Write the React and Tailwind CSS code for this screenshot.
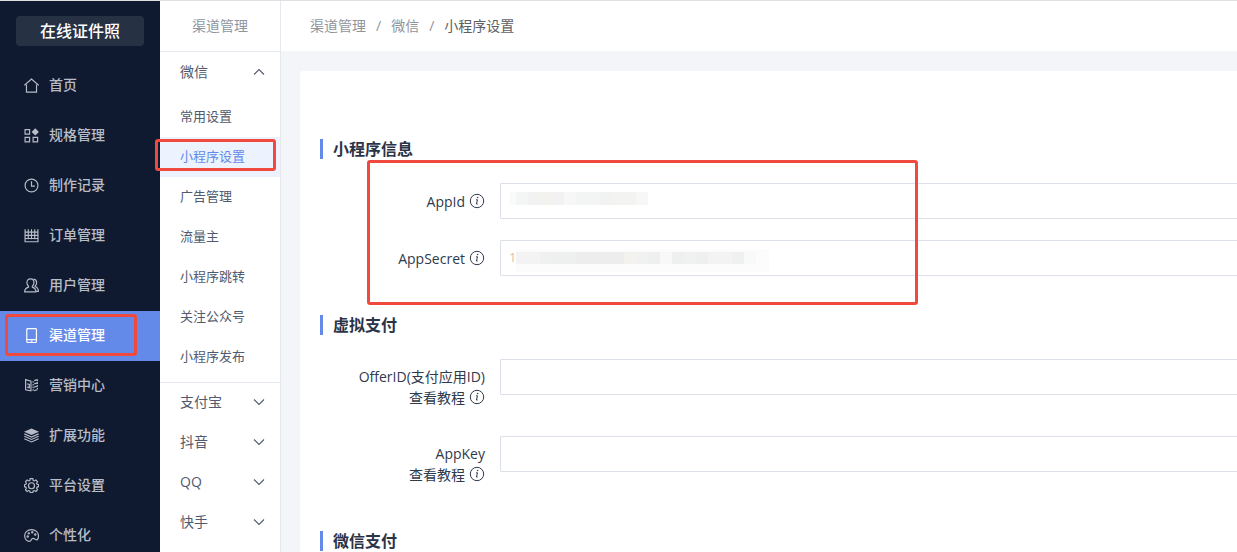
import { useState } from "react";

const ICONS = {
    home: (
        <>
            <path d="M0.3 6.8 7 1l6.7 5.8" />
            <path d="M2.3 6v7.200h9.400V6" />
        </>
    ),
    spec: (
        <>
            <path d="M1 1.500h4.200v4.200H1zM1 8.700h4.200v4.200H1zM8.500 8.700h4.200v4.200H8.500z" />
            <path d="M10.500 0.300 13.900 3.700 10.500 7.100 7.100 3.700z" fill="currentColor" stroke="none" />
        </>
    ),
    clock: (
        <>
            <circle cx="7" cy="7" r="6" />
            <path d="M7 3v4.500h3.200" />
        </>
    ),
    order: (
        <>
            <path d="M1 1.200v11.600h12V1.200M1 3.800h12M1 6.800h12M1 9.800h12" />
            <path d="M4 1.200v9.300M7 1.200v9.300M10 1.200v9.300" />
        </>
    ),
    user: (
        <>
            <path d="M6 0.8c2 0 3.300 1.400 3.300 3.500 0 1.600-.7 2.800-1.500 3.400v.8c2 .6 3.400 1.800 3.400 4.500H.6c0-2.700 1.500-3.900 3.600-4.500v-.8C3.300 7 2.700 5.900 2.700 4.300 2.700 2.200 4 .8 6 .8z" />
            <path d="M9 1c1.800.2 2.800 1.600 2.800 3.300 0 1.500-.6 2.500-1.400 3.100v.6c1.900.7 3 2 3 4.400h-2" />
        </>
    ),
    phone: (
        <>
            <rect x="2.600" y="0.500" width="9" height="13" rx="1" />
            <path d="M2.600 10.900h9" />
            <path d="M6.200 12.300h1.800" />
        </>
    ),
    market: (
        <>
            <path d="M1.500 1.500 6.500 3v9l-5-1z" />
            <path d="M3 5.500 5 6v3l-2-.5" />
            <path d="M9.500 2.500 12.500 1.500M9.500 5.500 12.500 4.500M9.500 8.500 12.500 7.500M9.500 11.800l3-.8" />
            <path d="M8.500 3v9M12.500 1.500v10" strokeDasharray="1.500 1" />
        </>
    ),
    layers: (
        <>
            <path d="M7 0.500 14 3.500 7 6.600 0 3.500z" fill="currentColor" stroke="none" />
            <path d="M.3 5.500 7 8.500l6.700-3M.3 7.700l6.700 3 6.700-3M.3 10l6.700 3 6.700-3" />
        </>
    ),
    gear: (
        <>
            <path d="M5.800.6h2.400l.4 1.700 1 .4L11.100 1.800l1.500 1.600-.8 1.500.4 1 1.400.4v1.800l-1.400.4-.4 1 .8 1.500-1.500 1.600-1.500-.9-1 .4-.4 1.600H5.800l-.4-1.600-1-.4-1.500.9-1.500-1.600.8-1.500-.4-1L.4 8.100V6.300l1.400-.4.4-1-.8-1.500 1.500-1.600 1.500.9 1-.4z" />
            <circle cx="7" cy="7.200" r="2.800" />
        </>
    ),
    palette: (
        <>
            <path d="M7 1.500C3.300 1.500.6 4 .6 7.200c0 3.100 2.200 5.300 4.400 5.300 2.500 0 1.200-2.800 3.400-2.800 1.600 0 2.300 1.300 3.500 1.300 1 0 1.600-1.500 1.600-3.500C13.500 4 10.700 1.500 7 1.500z" />
            <circle cx="3.500" cy="8" r=".6" />
            <circle cx="4.500" cy="5" r=".6" />
            <circle cx="7.700" cy="4" r=".6" />
            <circle cx="10.500" cy="6" r=".6" />
        </>
    ),
};

const NAV = [
    { label: "首页", icon: "home" },
    { label: "规格管理", icon: "spec" },
    { label: "制作记录", icon: "clock" },
    { label: "订单管理", icon: "order" },
    { label: "用户管理", icon: "user" },
    { label: "渠道管理", icon: "phone", active: true },
    { label: "营销中心", icon: "market" },
    { label: "扩展功能", icon: "layers" },
    { label: "平台设置", icon: "gear" },
    { label: "个性化", icon: "palette" },
];

const WECHAT_ITEMS = [
    "常用设置",
    "小程序设置",
    "广告管理",
    "流量主",
    "小程序跳转",
    "关注公众号",
    "小程序发布",
];

const OTHER_CHANNELS = ["支付宝", "抖音", "QQ", "快手"];

const Icon = ({ name }) => (
    <svg
        viewBox="0 0 14 14"
        className="h-[15px] w-[15px] shrink-0"
        fill="none"
        stroke="currentColor"
        strokeWidth="1.100"
        aria-hidden="true"
    >
        {ICONS[name]}
    </svg>
);

const InfoIcon = () => (
    <svg
        viewBox="0 0 16 16"
        className="ml-1 inline-block h-4 w-4 align-[-2px]"
        fill="none"
        stroke="currentColor"
        aria-hidden="true"
    >
        <circle cx="8" cy="8" r="6.700" />
        <path d="M7 6.800h1.500l-1.100 4.200h1.300" />
        <circle cx="8.600" cy="4.500" r=".8" fill="currentColor" stroke="none" />
    </svg>
);

const Chevron = ({ up }) => (
    <svg
        viewBox="0 0 12 12"
        className="h-3 w-3"
        fill="none"
        stroke="currentColor"
        strokeWidth="1.100"
        aria-hidden="true"
    >
        <path d={up ? "M1 8.500 6 3.500l5 5" : "M1 3.500l5 5 5-5"} />
    </svg>
);

// red marker frame, placed over whatever it highlights
const Marker = ({ className }) => (
    <span
        className={`pointer-events-none absolute z-10 rounded-[3px] border-3 border-[#f04a3e] ${className}`}
    />
);

const Section = ({ title, children }) => (
    <section className="mb-[39px]">
        <h2 className="mb-6 border-l-3 border-[#648ae9] pl-2.5 text-base leading-5 font-bold text-[#2b3447]">
            {title}
        </h2>
        <div className="relative flex flex-col gap-[21px]">{children}</div>
    </section>
);

const Field = ({ id, label, tutorial, children }) => {
    const [value, setValue] = useState("");

    return (
        <div className="flex items-start gap-[15px]">
            <div
                className={`w-[165px] shrink-0 text-right leading-[21px] text-[#2f3a4c] ${tutorial ? "pt-[7px] pb-[7px]" : "pt-2"}`}
            >
                <label htmlFor={id}>{label}</label>
                {tutorial && (
                    <>
                        <br />
                        <a href="#tutorial">查看教程</a>
                    </>
                )}
                <InfoIcon />
            </div>
            <div className="relative min-w-0 flex-1">
                <input
                    id={id}
                    type="text"
                    value={value}
                    onChange={(e) => setValue(e.target.value)}
                    className="block h-9 w-full rounded-l-xs border border-r-0 border-[#dce0e8] bg-white px-2.5 outline-none"
                />
                {children}
            </div>
        </div>
    );
};

export default function App() {
    return (
        <div className="flex h-screen overflow-hidden border-t border-[#dfe0e0] bg-[#f4f5f9] font-['Open_Sans','Noto_Sans_CJK_SC',sans-serif] text-sm">
            <nav className="w-40 shrink-0 bg-[#0f1a30] pt-[15px]">
                <div className="mx-4 mb-[15px] flex h-[30px] items-center justify-center rounded bg-[#273144] text-base font-medium text-white">
                    在线证件照
                </div>
                {NAV.map((item) => (
                    <a
                        key={item.label}
                        href="#nav"
                        className={`relative flex h-[50px] items-center gap-2.5 pb-0.5 pl-6 font-medium ${
                            item.active ? "bg-[#648ae9] text-white" : "text-[#b7bcc6]"
                        }`}
                    >
                        <Icon name={item.icon} />
                        {item.label}
                        {item.active && <Marker className="top-[3px] left-[5px] h-[42px] w-[132px]" />}
                    </a>
                ))}
            </nav>

            <aside className="w-[121px] shrink-0 border-r border-[#e6e8f0] bg-white text-[#515a6e]">
                <div className="flex h-[51px] items-center justify-center border-b border-[#e6e8f0] text-[#8d95a3]">
                    渠道管理
                </div>
                <div className="border-b border-[#e6e8f0] pb-[5px]">
                    <button type="button" className="mb-[5px] flex h-10 w-full items-center justify-between pr-[15px] pl-5">
                        微信
                        <Chevron up />
                    </button>
                    {WECHAT_ITEMS.map((name) => {
                        const active = name === "小程序设置";
                        return (
                            <a
                                key={name}
                                href="#channel"
                                className={`relative flex h-10 items-center pb-0.5 pl-5 text-[13px] ${
                                    active ? "bg-[#ecf2fe] text-[#648ae9]" : ""
                                }`}
                            >
                                {name}
                                {active && <Marker className="top-[2px] -left-[5px] h-8 w-[121px]" />}
                            </a>
                        );
                    })}
                </div>
                {OTHER_CHANNELS.map((name) => (
                    <button
                        key={name}
                        type="button"
                        className="flex h-10 w-full items-center justify-between pr-[15px] pb-0.5 pl-5"
                    >
                        {name}
                        <Chevron />
                    </button>
                ))}
            </aside>

            <main className="min-w-0 flex-1">
                <div className="flex h-[50px] items-center gap-2.5 bg-white pl-[29px] text-[#8f949b]">
                    <a href="#channel">渠道管理</a>
                    <span>/</span>
                    <a href="#wechat">微信</a>
                    <span>/</span>
                    <span className="text-[#5c6066]">小程序设置</span>
                </div>

                <div className="mt-5 ml-[19px] min-h-full rounded-tl-sm bg-white pt-[68px] pl-5">
                    <Section title="小程序信息">
                        <Field id="appid" label="AppId">
                            <span className="absolute top-[9px] left-2.5 flex h-[13px]">
                                <span className="w-1.5 bg-[#fafafa]" />
                                <span className="w-3 bg-[#f4f6f5]" />
                                <span className="w-3 bg-[#f2f2f2]" />
                                <span className="w-3 bg-[#f3f2ef]" />
                                <span className="w-3 bg-[#f2f2f2]" />
                                <span className="w-3 bg-[#f7f7f7]" />
                                <span className="w-6 bg-[#f3f5f5]" />
                                <span className="w-3 bg-[#f2f2f2]" />
                                <span className="w-6 bg-[#f3f3f1]" />
                                <span className="w-3 bg-[#f7f7f7]" />
                            </span>
                        </Field>
                        <Field id="appsecret" label="AppSecret">
                            <span className="absolute top-[9px] left-2 flex">
                                <span className="w-2 pt-[3px] text-right text-xs leading-3 text-[#d3bfa4]">1</span>
                                <span className="flex h-[23px] w-[253px] bg-[#fcfcfc] pt-[3px]">
                                    <span className="h-3 w-6 bg-[#f3f3f3]" />
                                    <span className="h-3 w-3 bg-[#f0f0f0]" />
                                    <span className="h-3 w-6 bg-[#eef0ef]" />
                                    <span className="h-3 w-12 bg-[#ededed]" />
                                    <span className="h-3 w-3 bg-[#f4f2ef]" />
                                    <span className="h-3 w-3 bg-[#f1f1f1]" />
                                    <span className="h-3 w-3 bg-[#eef0ef]" />
                                    <span className="h-3 w-3 bg-[#f8f8f8]" />
                                    <span className="h-3 w-3 bg-[#eef0ef]" />
                                    <span className="h-3 w-3 bg-[#f1f1f1]" />
                                    <span className="h-3 w-3 bg-[#eef0ef]" />
                                    <span className="h-3 w-6 bg-[#f3f3f3]" />
                                    <span className="h-3 w-3 bg-[#f0f0f0]" />
                                    <span className="h-3 w-3 bg-[#f8faf9]" />
                                </span>
                            </span>
                        </Field>
                        <Marker className="-top-[23px] left-[47px] h-[145px] w-[551px]" />
                    </Section>

                    <Section title="虚拟支付">
                        <Field id="offerid" label="OfferID(支付应用ID)" tutorial />
                        <Field id="appkey" label="AppKey" tutorial />
                    </Section>

                    <Section title="微信支付" />
                </div>
            </main>
        </div>
    );
}
